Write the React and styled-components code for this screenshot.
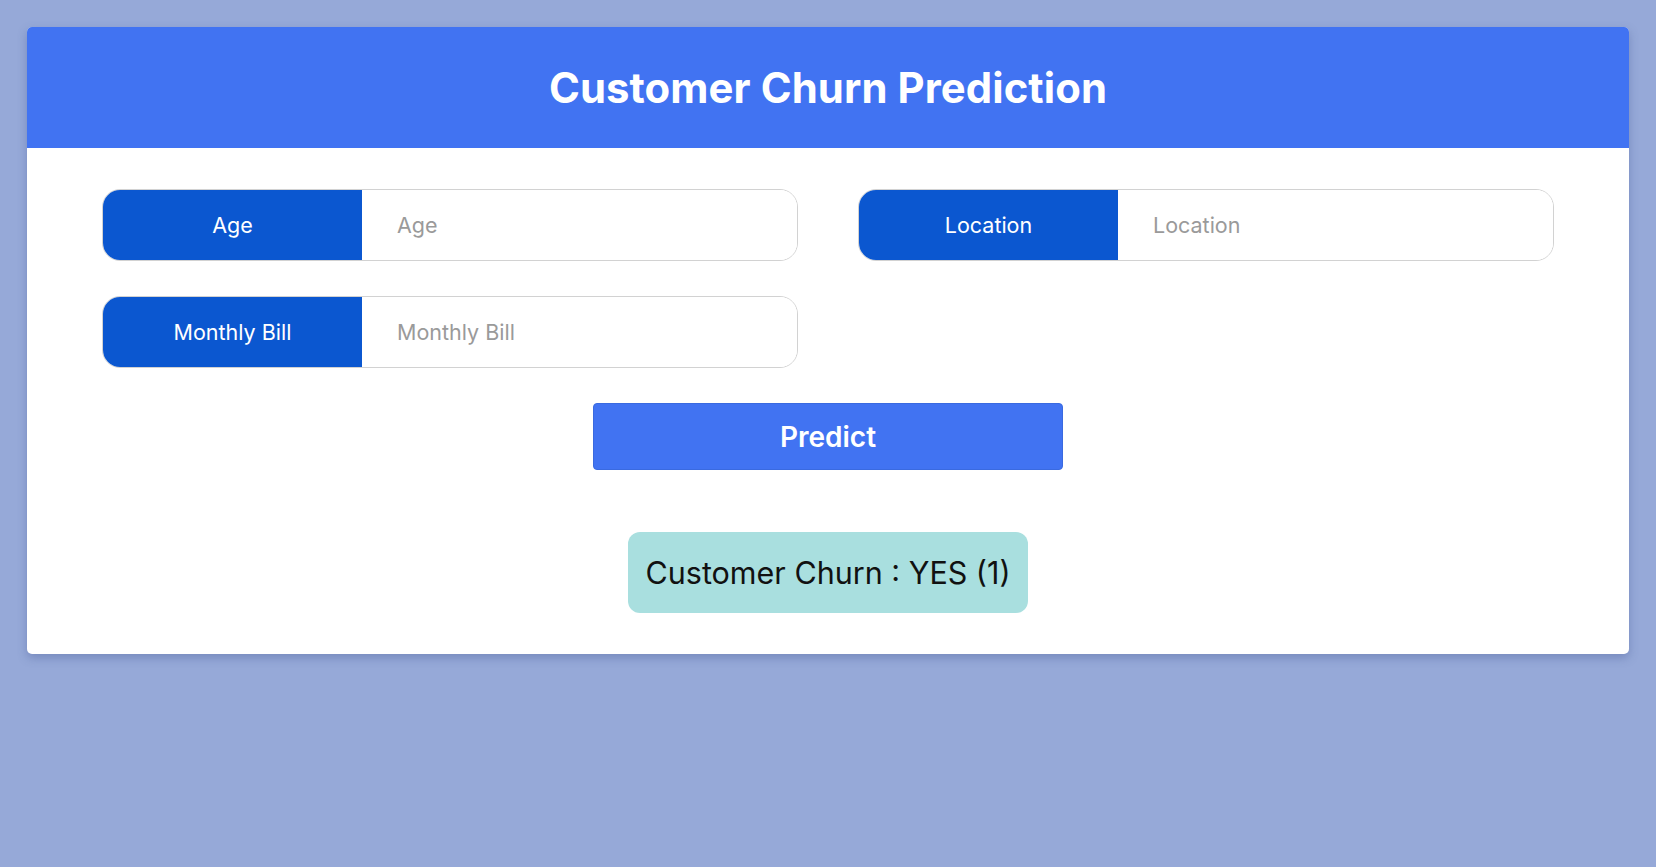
import React from 'react';
import styled, { createGlobalStyle } from 'styled-components';

const GlobalStyle = createGlobalStyle`
  * {
    box-sizing: border-box;
  }

  body {
    margin: 0;
    min-height: 100vh;
    background: #96a9d8;
    font-family: 'Inter', 'Open Sans', sans-serif;
  }
`;

const Page = styled.div`
  padding: 27px;
`;

const Card = styled.div`
  background: #ffffff;
  border-radius: 5px;
  overflow: hidden;
  box-shadow: 0 4px 10px rgba(60, 80, 140, 0.35);
`;

const Header = styled.header`
  height: 121px;
  background: #4173f2;
  display: flex;
  align-items: center;
  justify-content: center;
`;

const Title = styled.h1`
  margin: 0;
  color: #ffffff;
  font-size: 41.8px;
  font-weight: 700;
  letter-spacing: 0.1px;
`;

const Body = styled.div`
  padding: 41px 75px 41px;
  display: flex;
  flex-direction: column;
  align-items: center;
`;

const FieldGrid = styled.div`
  width: 100%;
  display: grid;
  grid-template-columns: 1fr 1fr;
  column-gap: 60px;
  row-gap: 35px;
`;

const InputGroup = styled.div`
  display: flex;
  height: 72px;
  border: 1px solid #d2d2d2;
  border-radius: 18px;
  overflow: hidden;
`;

const GroupLabel = styled.label`
  flex: 0 0 259px;
  background: #0b57d0;
  color: #ffffff;
  display: flex;
  align-items: center;
  justify-content: center;
  font-size: 21.5px;
  font-weight: 400;
`;

const GroupInput = styled.input`
  flex: 1;
  min-width: 0;
  border: none;
  outline: none;
  padding: 0 35px;
  font-family: inherit;
  font-size: 21.5px;
  color: #333;
  background: #ffffff;

  &::placeholder {
    color: #9a9a9a;
  }
`;

const PredictButton = styled.button`
  margin-top: 35px;
  width: 470px;
  height: 67px;
  border: 1px solid #3a6ae0;
  border-radius: 4px;
  background: #4173f2;
  color: #ffffff;
  font-family: inherit;
  font-size: 28px;
  font-weight: 600;
  cursor: pointer;
`;

const Result = styled.div`
  margin-top: 62px;
  width: 400px;
  height: 81px;
  border-radius: 12px;
  background: #a9dfdf;
  color: #111111;
  display: flex;
  align-items: center;
  justify-content: center;
  font-size: 30.5px;
  font-weight: 400;
`;

const fields = [
  { id: 'age', label: 'Age' },
  { id: 'location', label: 'Location' },
  { id: 'bill', label: 'Monthly Bill' },
];

export default function App() {
  return (
    <>
      <GlobalStyle />
      <Page>
        <Card>
          <Header>
            <Title>Customer Churn Prediction</Title>
          </Header>
          <Body>
            <FieldGrid>
              {fields.map((f) => (
                <InputGroup key={f.id}>
                  <GroupLabel htmlFor={f.id}>{f.label}</GroupLabel>
                  <GroupInput id={f.id} type="text" placeholder={f.label} />
                </InputGroup>
              ))}
            </FieldGrid>
            <PredictButton type="button">Predict</PredictButton>
            <Result>Customer Churn : YES (1)</Result>
          </Body>
        </Card>
      </Page>
    </>
  );
}
